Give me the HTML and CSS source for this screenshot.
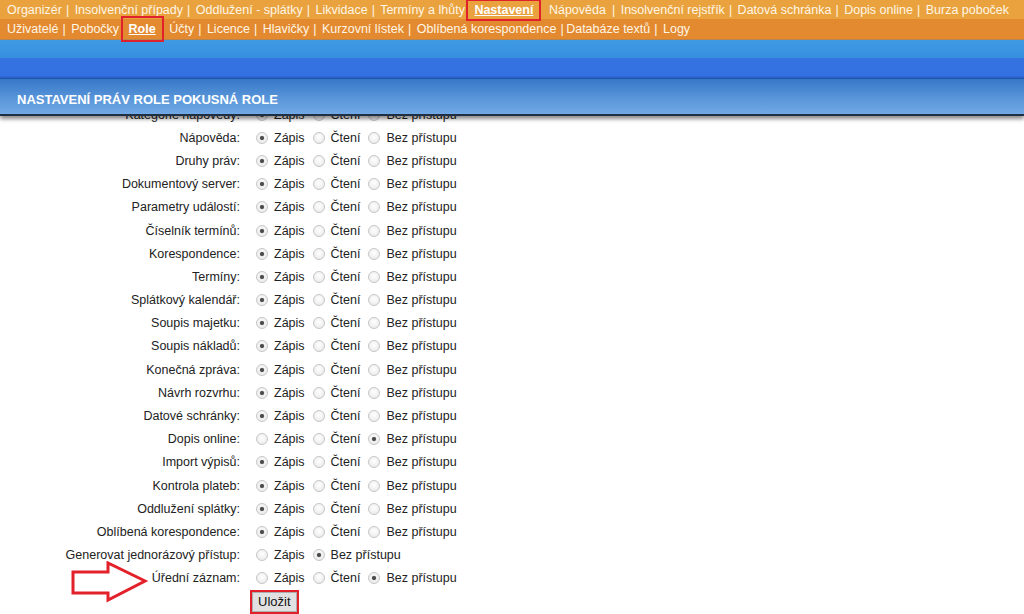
FILE: index.html
```html
<!DOCTYPE html>
<html lang="cs">
<head>
    <meta charset="UTF-8">
    <title>Nastavení práv role</title>
    <link rel="stylesheet" href="styles.css">
</head>
<body>

    <!-- Hlavni menu -->
    <div class="menu menu-main">
        <a href="#">Organizér</a><span class="sep">|</span>
        <a href="#">Insolvenční případy</a><span class="sep">|</span>
        <a href="#">Oddlužení - splátky</a><span class="sep">|</span>
        <a href="#">Likvidace</a><span class="sep">|</span>
        <a href="#">Termíny a lhůty</a>
        <a href="#" class="active marked">Nastavení</a>
        <a href="#">Nápověda</a><span class="sep wide">|</span>
        <a href="#">Insolvenční rejstřík</a><span class="sep">|</span>
        <a href="#">Datová schránka</a><span class="sep">|</span>
        <a href="#">Dopis online</a><span class="sep">|</span>
        <a href="#">Burza poboček</a>
    </div>
    <div class="menu menu-sub">
        <a href="#">Uživatelé</a><span class="sep">|</span>
        <a href="#">Pobočky</a>
        <a href="#" class="active marked">Role</a>
        <a href="#">Účty</a><span class="sep">|</span>
        <a href="#">Licence</a><span class="sep">|</span>
        <a href="#">Hlavičky</a><span class="sep">|</span>
        <a href="#">Kurzovní lístek</a><span class="sep">|</span>
        <a href="#">Oblíbená korespondence</a><span class="sep tight">|</span>
        <a href="#">Databáze textů</a><span class="sep">|</span>
        <a href="#">Logy</a>
    </div>

    <div class="band">
        <div class="band-top"></div>
        <div class="band-bottom"></div>
    </div>

    <div class="page-title">NASTAVENÍ PRÁV ROLE POKUSNÁ ROLE</div>

    <form class="rights" id="rights"></form>

    <svg class="pointer" width="80" height="44" viewBox="0 0 80 44">
        <polygon points="2,11 37,11 37,2 74,20 37,39 37,32 2,32" fill="#fff" stroke="#e3212b" stroke-width="3" stroke-linejoin="miter"/>
    </svg>

    <script>
        // seznam prav: nazev, zvolena volba (0 zapis, 1 cteni, 2 bez pristupu), bez cteni
        const rows = [
            ['Kategorie nápovědy', 0],
            ['Nápověda', 0],
            ['Druhy práv', 0],
            ['Dokumentový server', 0],
            ['Parametry událostí', 0],
            ['Číselník termínů', 0],
            ['Korespondence', 0],
            ['Termíny', 0],
            ['Splátkový kalendář', 0],
            ['Soupis majetku', 0],
            ['Soupis nákladů', 0],
            ['Konečná zpráva', 0],
            ['Návrh rozvrhu', 0],
            ['Datové schránky', 0],
            ['Dopis online', 2],
            ['Import výpisů', 0],
            ['Kontrola plateb', 0],
            ['Oddlužení splátky', 0],
            ['Oblíbená korespondence', 0],
            ['Generovat jednorázový přístup', 2, true],
            ['Úřední záznam', 2]
        ];

        const form = document.getElementById('rights');
        let html = '';
        rows.forEach((row, i) => {
            const opts = row[2]
                ? [['Zápis', 0], ['Bez přístupu', 2]]
                : [['Zápis', 0], ['Čtení', 1], ['Bez přístupu', 2]];
            html += '<div class="row"><span class="row-label">' + row[0] + ':</span><span class="options">';
            opts.forEach(opt => {
                html += '<label class="opt"><input type="radio" name="r' + i + '"' +
                    (opt[1] === row[1] ? ' checked' : '') + '><span>' + opt[0] + '</span></label>';
            });
            html += '</span></div>';
        });
        html += '<div class="actions"><button type="button" class="save marked">Uložit</button></div>';
        form.innerHTML = html;
    </script>

</body>
</html>
```

FILE: styles.css
```css
* {
    margin: 0;
    padding: 0;
    box-sizing: border-box;
}

body {
    font-family: 'Liberation Sans', Arial, sans-serif;
    font-size: 12.5px;
    color: #222;
    background: #fff;
    overflow: hidden;
    position: relative;
    height: 614px;
}

/* Menu */
.menu {
    color: #fff6e6;
    white-space: nowrap;
    padding-left: 7px;
}

.menu a {
    color: #fff6e6;
    text-decoration: none;
}

.menu .sep {
    margin: 0 2px 0 4px;
}

.menu .sep.wide {
    margin: 0 2px 0 6px;
}

.menu .sep.tight {
    margin: 0 -1px 0 4px;
}

.menu-main {
    background: #e9a23d;
    height: 19px;
    line-height: 19px;
}

.menu-sub {
    background: #e3892f;
    height: 21px;
    line-height: 20px;
    border-bottom: 1px solid #b8844f;
}

.menu a.active {
    font-weight: bold;
    text-decoration: underline;
    color: #fff;
    padding: 0 6px;
}

.menu-main a.active {
    margin: 0 6px 0 0;
}

.menu-sub a.active {
    margin: 0 4px 0 0;
}

/* red annotation boxes */
.marked {
    outline: 2px solid #e0202a;
    outline-offset: 0;
}

.menu-main a.marked {
    display: inline-block;
    line-height: 18px;
    margin-top: 1px;
}

.menu-sub a.marked {
    display: inline-block;
    line-height: 22px;
    margin-top: -1px;
    position: relative;
    z-index: 2;
}

/* Modry pruh */
.band {
    height: 40px;
}

.band-top {
    height: 18px;
    background: linear-gradient(#3f9ae3, #3790df);
}

.band-bottom {
    height: 22px;
    background: linear-gradient(#3473e0 0, #3370e1 80%, #2a5fc0 90%, #1f4f9f 95%, #44a2e8 100%);
}

.page-title {
    position: relative;
    z-index: 1;
    height: 36px;
    padding: 12px 0 0 17px;
    font-size: 13px;
    font-weight: bold;
    color: #fff;
    background: linear-gradient(#3879c9, #5c98db 60%, #72a9e6);
    border-bottom: 2px solid #1f2f44;
    box-shadow: 0 3px 4px rgba(0, 0, 0, 0.45);
    margin-bottom: -13px;
}

/* Formular */
.rights {
    display: flex;
    flex-direction: column;
}

.row {
    display: flex;
    align-items: center;
    height: 23.2px;
}

.row-label {
    width: 240px;
    text-align: right;
    color: #222;
}

.options {
    display: flex;
    align-items: center;
    gap: 8px;
    margin-left: 16px;
}

.opt {
    display: flex;
    align-items: center;
    gap: 6px;
}

.opt input {
    appearance: none;
    width: 12px;
    height: 12px;
    border-radius: 50%;
    border: 1px solid #c6c6c6;
    background: radial-gradient(circle at 50% 40%, #fff 0, #e6e6e6 100%);
    display: grid;
    place-items: center;
}

.opt input:checked::after {
    content: '';
    width: 4px;
    height: 4px;
    border-radius: 50%;
    background: #4a4a4a;
    box-shadow: 0 0 1px #777;
}

.actions {
    padding: 2px 0 0 252px;
}

.save {
    font-family: 'Liberation Sans', Arial, sans-serif;
    font-size: 13px;
    color: #111;
    background: #e1e1e1;
    border: 1px solid #adadad;
    height: 20px;
    padding: 0 5px;
    outline-offset: 0;
}

/* sipka */
.pointer {
    position: absolute;
    left: 71px;
    top: 561px;
}
```
